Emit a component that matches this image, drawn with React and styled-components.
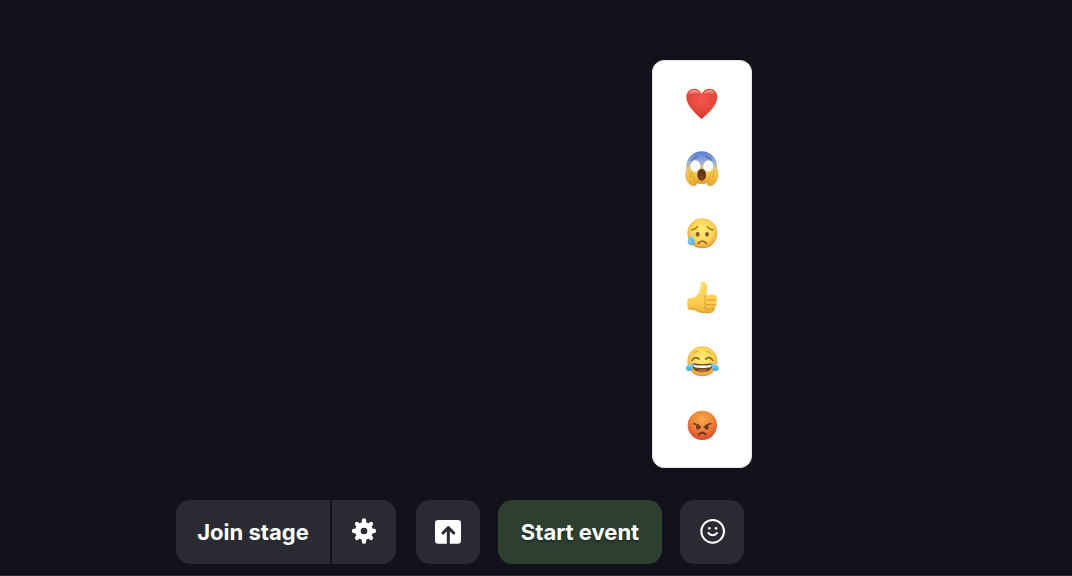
import React, { useState } from "react";
import styled, { createGlobalStyle } from "styled-components";

const GlobalStyle = createGlobalStyle`
  * {
    box-sizing: border-box;
  }
  body {
    margin: 0;
    background: #11121a;
    font-family: Inter, "Liberation Sans", sans-serif;
  }
`;

const Page = styled.main`
  display: flex;
  flex-direction: column;
  justify-content: flex-end;
  min-height: 100vh;
  border-bottom: 1px solid #2b2a33;
`;

const Toolbar = styled.div`
  display: flex;
  align-items: center;
  gap: 18px;
  padding: 0 176px 11px;
`;

const StageControls = styled.div`
  display: flex;
  gap: 20px;
`;

const SplitButton = styled.div`
  display: flex;
  gap: 2px;
  border-radius: 14px;
  overflow: hidden;
`;

const Button = styled.button`
  display: flex;
  align-items: center;
  justify-content: center;
  min-width: ${({ $primary }) => ($primary ? "164px" : "154px")};
  height: 64px;
  padding: 0 20px;
  border: none;
  border-radius: ${({ $joined }) => ($joined ? "0" : "14px")};
  background: ${({ $primary }) => ($primary ? "#2d4030" : "#2a2a32")};
  color: #fff;
  font-family: inherit;
  font-size: 22px;
  font-weight: 700;
  line-height: 28px;
  white-space: nowrap;
  text-shadow: ${({ $primary }) => ($primary ? "0 2px 2px rgba(0, 0, 0, 0.3)" : "none")};
  cursor: pointer;
`;

const IconButton = styled(Button)`
  min-width: 0;
  width: 64px;
  padding: 0;
`;

const Reactions = styled.div`
  position: relative;
`;

const ReactionMenu = styled.div`
  position: absolute;
  bottom: calc(100% + 32px);
  left: -28px;
  display: flex;
  flex-direction: column;
  align-items: center;
  width: 100px;
  padding: 11px 0;
  border: 1px solid #e6e6ec;
  border-radius: 12px;
  background: #fff;
`;

const ReactionButton = styled.button`
  display: flex;
  align-items: center;
  justify-content: center;
  width: 64px;
  height: 64px;
  padding: 0;
  border: none;
  background: none;
  cursor: pointer;
`;

const GearIcon = () => (
  <svg width="26" height="28" viewBox="0 0 78 84" aria-hidden="true">
    <g stroke="#fff" strokeWidth="13" strokeLinecap="round">
      <path d="M39 7v64M9 39h60M18 18l42 42M60 18L18 60" />
    </g>
    <circle cx="39" cy="39" r="18" fill="none" stroke="#fff" strokeWidth="18" />
    <circle cx="39" cy="39" r="10" fill="#2a2a32" />
  </svg>
);

const ShareIcon = () => (
  <svg width="26" height="24" viewBox="0 0 78 72" aria-hidden="true">
    <rect y="0" width="78" height="71" rx="9" fill="#fff" />
    <path
      d="M24 39l16-16 16 16M40 25v46"
      fill="none"
      stroke="#2a2a32"
      strokeWidth="9"
      strokeLinecap="round"
      strokeLinejoin="round"
    />
  </svg>
);

const SmileIcon = () => (
  <svg width="26" height="26" viewBox="0 0 78 78" aria-hidden="true">
    <circle cx="41" cy="37" r="34" fill="none" stroke="#fff" strokeWidth="6" />
    <circle cx="31" cy="28" r="4" fill="#fff" />
    <circle cx="51" cy="28" r="4" fill="#fff" />
    <path d="M28 42q13 13 26 0" fill="none" stroke="#fff" strokeWidth="6" strokeLinecap="round" />
  </svg>
);

// gradients shared by the faces
const Gradients = () => (
  <svg width="0" height="0" style={{ display: "block" }} aria-hidden="true">
    <defs>
      <radialGradient id="heart" cx=".5" cy=".35" r=".65">
        <stop offset="0" stopColor="#f2574b" />
        <stop offset=".7" stopColor="#e54538" />
        <stop offset="1" stopColor="#cb3328" />
      </radialGradient>
      <linearGradient id="shine" x2="0" y2="1">
        <stop offset="0" stopColor="#fff" stopOpacity=".55" />
        <stop offset="1" stopColor="#fff" stopOpacity="0" />
      </linearGradient>
      <radialGradient id="yellow" cx=".5" cy=".42" r=".58">
        <stop offset="0" stopColor="#ffec75" />
        <stop offset=".6" stopColor="#fcd858" />
        <stop offset=".85" stopColor="#f3b145" />
        <stop offset="1" stopColor="#e28a30" />
      </radialGradient>
      <linearGradient id="scream" x2="0" y2="1">
        <stop offset="0" stopColor="#567bd0" />
        <stop offset=".3" stopColor="#8fa9d8" />
        <stop offset=".52" stopColor="#dfc884" />
        <stop offset=".7" stopColor="#f9cb45" />
        <stop offset="1" stopColor="#e69b2b" />
      </linearGradient>
      <linearGradient id="hand" x2="0" y2="1">
        <stop offset="0" stopColor="#ffd957" />
        <stop offset="1" stopColor="#e6a32c" />
      </linearGradient>
      <linearGradient id="thumb" x2="0" y2="1">
        <stop offset="0" stopColor="#ffdc62" />
        <stop offset=".7" stopColor="#fbcb4c" />
        <stop offset="1" stopColor="#e9ad36" />
      </linearGradient>
      <linearGradient id="tear" x2="0" y2="1">
        <stop offset="0" stopColor="#9bdcf7" />
        <stop offset="1" stopColor="#39a4e0" />
      </linearGradient>
      <radialGradient id="angry" cx=".5" cy=".3" r=".75">
        <stop offset="0" stopColor="#f8ab45" />
        <stop offset=".5" stopColor="#ee8238" />
        <stop offset="1" stopColor="#d4402b" />
      </radialGradient>
    </defs>
  </svg>
);

const Emoji = ({ top = -6, children }) => (
  <svg width="52" height="48" viewBox={`0 ${top} 156 144`} aria-hidden="true">
    {children}
  </svg>
);

const Heart = () => (
  <Emoji top={0}>
    <path
      d="M77 117C64 106 31 78 31 52c0-16 11-26 24-26 11 0 18 6 22 16 4-10 12-16 23-16 13 0 24 10 24 26 0 26-34 54-47 65z"
      fill="url(#heart)"
    />
    <path d="M37 46c1-11 9-16 18-16 8 0 14 4 17 11-9-3-24-4-35 5z" fill="url(#shine)" />
    <path d="M83 41c3-7 9-11 17-11 9 0 17 5 18 16-11-9-26-8-35-5z" fill="url(#shine)" />
  </Emoji>
);

const Scream = () => (
  <Emoji top={0}>
    <ellipse cx="77" cy="71" rx="47" ry="49" fill="url(#scream)" />
    <path d="M48 48q8-9 18-10M106 48q-8-9-18-10" fill="none" stroke="#5574bd" strokeWidth="4" strokeLinecap="round" />
    <ellipse cx="58" cy="66" rx="15" ry="17" fill="#fff" />
    <ellipse cx="97" cy="66" rx="15" ry="17" fill="#fff" />
    <circle cx="60" cy="66" r="3" fill="#e6e0da" />
    <circle cx="95" cy="66" r="3" fill="#e6e0da" />
    <ellipse cx="77" cy="92" rx="13" ry="18" fill="#62371b" />
    <ellipse cx="77" cy="101" rx="7" ry="7" fill="#7a4826" />
    <path
      d="M31 80c-3 9-2 26 6 35 7 11 19 14 24 6 3-5-1-9-5-12-4-4-2-14-6-22-2-4-6-2-6 3l1 12-8-23c-2-4-6-3-6 1z"
      fill="url(#hand)"
      stroke="#dc9a30"
      strokeWidth="2"
    />
    <path
      d="M124 80c3 9 2 26-6 35-7 11-19 14-24 6-3-5 1-9 5-12 4-4 2-14 6-22 2-4 6-2 6 3l-1 12 8-23c2-4 6-3 6 1z"
      fill="url(#hand)"
      stroke="#dc9a30"
      strokeWidth="2"
    />
  </Emoji>
);

const Sad = () => (
  <Emoji>
    <circle cx="79" cy="70" r="45" fill="url(#yellow)" />
    <path d="M47 60q11-1 17-10M111 60q-11-1-17-10" fill="none" stroke="#a66f2b" strokeWidth="4" strokeLinecap="round" />
    <ellipse cx="65" cy="73" rx="6" ry="7" fill="#876026" />
    <ellipse cx="93" cy="73" rx="6" ry="7" fill="#876026" />
    <path d="M67 100q12-14 24 0" fill="none" stroke="#8f5d26" strokeWidth="5" strokeLinecap="round" />
    <path d="M46 72c-3 8-11 14-11 22 0 7 5 11 11 11s10-5 10-11c0-8-7-14-10-22z" fill="url(#tear)" />
    <path d="M41 92q0 7 6 8" fill="none" stroke="#c9efff" strokeWidth="3" strokeLinecap="round" />
  </Emoji>
);

const ThumbsUp = () => (
  <Emoji>
    <path
      d="M36 74c8-3 16-2 21-4 9-7 14-18 16-28 1-8 0-19 8-19 12 0 14 16 12 27l-3 14h8c9-4 25-4 25 6 0 4-1 6-2 8 3 4 2 9-1 13 1 5 0 9-4 12 0 11-9 15-22 15-17 0-25-2-34-7-7-4-15-1-23-5-4-8-4-25-1-32z"
      fill="url(#thumb)"
    />
    <path
      d="M90 64c-5 2-6 11 0 14-6 4-5 11 0 14-5 3-5 11 1 13-3 4-1 10 3 12M92 78h27M92 92h27M92 105h23"
      fill="none"
      stroke="#d79a31"
      strokeWidth="3"
      strokeLinecap="round"
    />
    <path d="M79 27q-1 23-10 36" fill="none" stroke="#ffe587" strokeWidth="3" strokeLinecap="round" />
    <path d="M44 105c8 0 14 1 20 5 8 5 25 7 39 5" fill="none" stroke="#e0a237" strokeWidth="3" strokeLinecap="round" />
  </Emoji>
);

const Joy = () => (
  <Emoji>
    <circle cx="79" cy="70" r="45" fill="url(#yellow)" />
    <path d="M51 49q5-8 14-9M107 49q-5-8-14-9" fill="none" stroke="#d39a40" strokeWidth="3" strokeLinecap="round" />
    <path d="M48 67q9-14 21-4M110 67q-9-14-21-4" fill="none" stroke="#8a6028" strokeWidth="5" strokeLinecap="round" />
    <path d="M46 75q33 7 66 0c0 18-15 28-33 28S46 93 46 75z" fill="#704721" />
    <path d="M51 80q28 5 56 0l-4 8q-24 4-48 0z" fill="#fff" />
    <path d="M63 98q16-8 32 0-16 9-32 0z" fill="#aa713f" />
    <path d="M52 74c0 15-4 25-13 25-7 0-11-6-9-12 3-8 14-8 22-13z" fill="url(#tear)" />
    <path d="M106 74c0 15 4 25 13 25 7 0 11-6 9-12-3-8-14-8-22-13z" fill="url(#tear)" />
  </Emoji>
);

const Angry = () => (
  <Emoji>
    <circle cx="79" cy="70" r="44" fill="url(#angry)" />
    <ellipse cx="66" cy="76" rx="6" ry="8" fill="#713a1f" />
    <ellipse cx="92" cy="76" rx="6" ry="8" fill="#713a1f" />
    <path d="M54 65q13 3 19 11M104 65q-13 3-19 11" fill="none" stroke="#7b3c22" strokeWidth="5" strokeLinecap="round" />
    <path d="M69 97q10-10 20 0" fill="none" stroke="#74351e" strokeWidth="6" strokeLinecap="round" />
  </Emoji>
);

const reactions = [
  { name: "Love", Icon: Heart },
  { name: "Shocked", Icon: Scream },
  { name: "Sad", Icon: Sad },
  { name: "Thumbs up", Icon: ThumbsUp },
  { name: "Laugh", Icon: Joy },
  { name: "Angry", Icon: Angry },
];

const App = () => {
  const [open, setOpen] = useState(true);

  return (
    <>
      <GlobalStyle />
      <Gradients />
      <Page>
        <Toolbar>
          <StageControls>
            <SplitButton>
              <Button $joined>Join stage</Button>
              <IconButton $joined aria-label="Settings">
                <GearIcon />
              </IconButton>
            </SplitButton>
            <IconButton aria-label="Share screen">
              <ShareIcon />
            </IconButton>
          </StageControls>
          <Button $primary>Start event</Button>
          <Reactions>
            {open && (
              <ReactionMenu>
                {reactions.map(({ name, Icon }) => (
                  <ReactionButton key={name} aria-label={name} onClick={() => setOpen(false)}>
                    <Icon />
                  </ReactionButton>
                ))}
              </ReactionMenu>
            )}
            <IconButton aria-label="Reactions" aria-expanded={open} onClick={() => setOpen(!open)}>
              <SmileIcon />
            </IconButton>
          </Reactions>
        </Toolbar>
      </Page>
    </>
  );
};

export default App;
